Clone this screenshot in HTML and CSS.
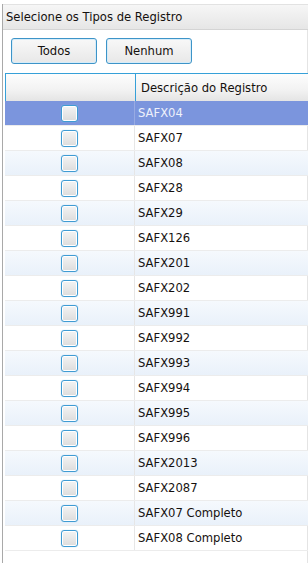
FILE: index.html
```html
<!DOCTYPE html>
<html lang="pt">
<head>
    <meta charset="UTF-8">
    <meta name="viewport" content="width=device-width, initial-scale=1.0">
    <title>Tipos de Registro</title>
    <link rel="stylesheet" href="styles.css">
</head>
<body>
    <div class="panel">
        <div class="panel-title">Selecione os Tipos de Registro</div>
        <div class="buttons">
            <button class="btn">Todos</button>
            <button class="btn">Nenhum</button>
        </div>
        <div class="grid">
            <div class="grid-head">
                <div class="cell-check"></div>
                <div class="cell-text">Descrição do Registro</div>
            </div>
            <div id="rows"></div>
        </div>
    </div>

    <script>
        // tipos de registro
        var tipos = ['SAFX04', 'SAFX07', 'SAFX08', 'SAFX28', 'SAFX29', 'SAFX126', 'SAFX201', 'SAFX202',
            'SAFX991', 'SAFX992', 'SAFX993', 'SAFX994', 'SAFX995', 'SAFX996', 'SAFX2013', 'SAFX2087',
            'SAFX07 Completo', 'SAFX08 Completo'];

        var rows = document.getElementById('rows');
        tipos.forEach(function (tipo, i) {
            var row = document.createElement('div');
            row.className = 'grid-row';
            if (i === 0) row.classList.add('selected');
            else if (i % 2 === 0) row.classList.add('alt');
            row.innerHTML = '<div class="cell-check"><span class="check"></span></div>' +
                '<div class="cell-text">' + tipo + '</div>';
            rows.appendChild(row);
        });
    </script>
</body>
</html>
```

FILE: styles.css
```css
body {
    margin: 0;
    padding: 0;
    background: #fff;
    font-family: "DejaVu Sans", Verdana, sans-serif;
    font-size: 11.6px;
    color: #15110f;
}

.panel {
    margin-top: 4px;
    margin-left: 2px;
    border-left: 1px solid #a9a9a9;
    height: 559px;
    box-shadow: -1px 0 0 #e4e4e4 inset;
}

.panel-title {
    height: 24px;
    line-height: 24px;
    padding-left: 3px;
    background: linear-gradient(#f6f6f6, #e6e6e6);
    border-top: 1px solid #e2e2e2;
    border-bottom: 1px solid #d4d4d4;
}

.buttons {
    display: flex;
    gap: 9px;
    padding: 8px 0 0 8px;
    height: 34px;
    box-sizing: border-box;
}

.btn {
    width: 86px;
    height: 26px;
    font-family: inherit;
    font-size: 11.6px;
    color: #15110f;
    border: 1px solid #3d94c8;
    border-radius: 3px;
    background: linear-gradient(#f8f8f8, #e8e8e8);
    box-shadow: inset 0 0 0 1px #d7ecf8;
    padding: 0;
}

.grid {
    margin: 9px 0 0 2px;
}

.grid-head {
    display: flex;
    height: 27px;
    border-top: 1px solid #36a0d8;
    border-left: 1px solid #36a0d8;
    background: linear-gradient(#fdfdfd 0%, #f2f2f2 60%, #e4e4e4 100%);
}

.grid-head .cell-text {
    padding-left: 5px;
    line-height: 28px;
}

.grid-head .cell-check {
    border-right: 1px solid #36a0d8;
}

.cell-check {
    width: 129px;
    flex: none;
    display: flex;
    align-items: center;
    justify-content: center;
    border-right: 1px solid #e6e6e6;
}

.cell-text {
    flex: 1;
    padding-left: 3px;
}

.grid-row {
    display: flex;
    height: 24px;
    line-height: 25px;
    border-bottom: 1px solid #ececec;
}

.grid-row.alt {
    background: linear-gradient(#f5f9fd, #e9f1fa);
}

.grid-row.selected {
    background: #7b95dd;
    color: #eef1fb;
}

.grid-row.selected .cell-check {
    border-right-color: #98abe3;
}

.check {
    width: 15px;
    height: 15px;
    border: 1px solid #3f9bd3;
    border-radius: 3px;
    background: linear-gradient(#f4f4f4, #dcdcdc);
    box-shadow: inset 0 0 0 1px #fff, 0 0 1px #8cc6ea;
}
```
